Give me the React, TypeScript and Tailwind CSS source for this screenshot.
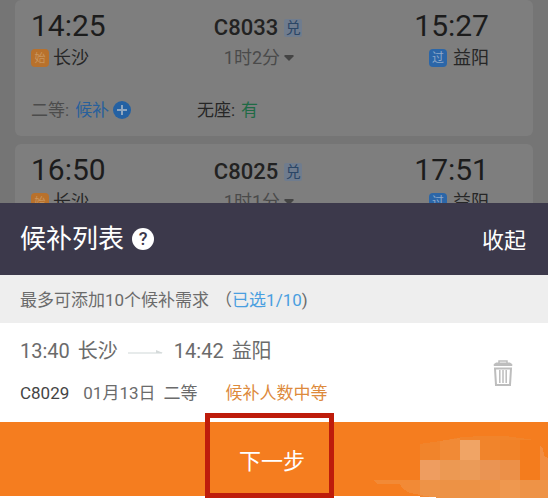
interface Train {
  depart: string;
  arrive: string;
  code: string;
  duration: string;
  seats?: { waitlist: string; standing: string };
}

const trains: Train[] = [
  {
    depart: "14:25",
    arrive: "15:27",
    code: "C8033",
    duration: "1时2分",
    seats: { waitlist: "候补", standing: "有" },
  },
  { depart: "16:50", arrive: "17:51", code: "C8025", duration: "1时1分" },
];

function TrainCard({ depart, arrive, code, duration, seats }: Train) {
  return (
    <article className="h-[136px] shrink-0 rounded-md bg-[#7e7e7e] px-4 pt-2">
      <div className="flex justify-between pr-7">
        <div>
          <div className="text-[30px] leading-9 text-[#1c1c1c]">{depart}</div>
          <div className="mt-0.5 flex items-center gap-1 text-[18px] leading-6 text-[#262626]">
            <span className="flex size-[18px] items-center justify-center rounded-sm bg-[#b8712c] text-[11px] leading-none text-[#c9965f]">
              始
            </span>
            长沙
          </div>
        </div>

        <div className="mr-1 pt-1">
          <div className="flex items-center gap-1.5 text-[22px] leading-8 font-medium text-[#222222]">
            {code}
            <span className="flex size-[18px] items-center justify-center rounded-xs bg-[#6f7c8e] text-[15px] leading-none font-normal text-[#2b4666]">
              兑
            </span>
          </div>
          <div className="flex items-center gap-1 pt-0.5 pl-2.5 text-[18px] leading-6 text-[#4a4a4a]">
            {duration}
            <svg className="h-[6px] w-[10px]" viewBox="0 0 10 6" fill="#444444">
              <path d="M1 0h8l1 1-5 5-5-5z" />
            </svg>
          </div>
        </div>

        <div className="flex flex-col items-end">
          <div className="text-[30px] leading-9 text-[#1c1c1c]">{arrive}</div>
          <div className="mt-0.5 flex items-center gap-1.5 text-[18px] leading-6 text-[#262626]">
            <span className="flex size-[18px] items-center justify-center rounded-sm bg-[#2b66a8] text-[12px] leading-none text-[#8fa9c8]">
              过
            </span>
            益阳
          </div>
        </div>
      </div>

      {seats && (
        <div className="mt-6 flex text-[17px] leading-8">
          <div className="flex w-1/3 items-center gap-1.5">
            <span className="text-[#4c4c4c]">二等:</span>
            <a href="#waitlist" className="flex items-center gap-1 text-[#28609c]">
              {seats.waitlist}
              <svg className="size-[18px]" viewBox="0 0 18 18">
                <circle cx="9" cy="9" r="9" fill="#2461a3" />
                <path d="M9 4v10M4 9h10" stroke="#8fa6bf" strokeWidth="2" />
              </svg>
            </a>
          </div>
          <div className="flex gap-1.5 pl-1">
            <span className="text-[#262626]">无座:</span>
            <span className="text-[#1f6a45]">{seats.standing}</span>
          </div>
        </div>
      )}
    </article>
  );
}

function TrashIcon() {
  return (
    <svg className="h-7 w-5" viewBox="0 0 20 28" fill="none" stroke="#bdbdbd">
      <path d="M6 4V2h8v2" strokeWidth="1.500" />
      <path d="M1 6.500V5.500L3 4h14l2 1.500v1z" fill="#bdbdbd" strokeWidth="1" />
      <path d="M2 9.500h16L17 26H3z" strokeWidth="2" />
      <path d="M6.800 11v13M10 11v13M13.200 11v13" strokeWidth="1.500" />
    </svg>
  );
}

function Mosaic() {
  return (
    <svg
      className="pointer-events-none absolute right-0 bottom-0 h-[62px] w-[175px]"
      viewBox="0 0 175 62"
      shapeRendering="crispEdges"
    >
      <path d="M0 44h47v17H59L47 59 37 57 30 53 27 48H5z" fill="#f28a36" />
      <path d="M47 8 67 5 87 1.500 107 0h25l15 2 14 2v20H47z" fill="#f1842b" />
      <path d="M67 5 87 2v22H67z" fill="#f18a36" />
      <path d="M87 4h20v20H87z" fill="#f0a465" />
      <path d="M127 4h20v20h-20z" fill="#f18228" />
      <path d="M47 24h20v20H47z" fill="#ee9d60" />
      <path d="M67 24h20v20H67z" fill="#ec9953" />
      <path d="M87 24h20v20H87z" fill="#eb9b58" />
      <path d="M107 24h20v20h-20z" fill="#ea9453" />
      <path d="M127 24h20v20h-20z" fill="#ec9048" />
      <path d="M147 4h20v40h-20z" fill="#f47c1d" />
      <path d="M167 10l3 2 1 8 4 2v22h-8z" fill="#f18d42" />
      <path d="M47 44h128v18H67l-8-1-12-2z" fill="#ee9347" />
      <path d="M67 44h40v18H67z" fill="#ed9245" />
      <path d="M127 44h20v18h-20z" fill="#ef984f" />
    </svg>
  );
}

export default function App() {
  return (
    <div className="flex h-screen flex-col overflow-hidden bg-[#757575] font-[Roboto,'Noto_Sans_CJK_SC',sans-serif]">
      <main className="flex min-h-0 flex-1 flex-col gap-2 overflow-hidden px-[15px]">
        {trains.map((train) => (
          <TrainCard key={train.code} {...train} />
        ))}
      </main>

      <section className="shrink-0 bg-white">
        <header className="flex h-[72px] items-center justify-between bg-[#3c394b] pr-[22px] pl-5 text-white">
          <div className="flex items-center gap-2">
            <h1 className="text-[26px] leading-9">候补列表</h1>
            <button
              aria-label="帮助"
              className="flex size-[22px] items-center justify-center rounded-full bg-white text-[18px] leading-none font-medium text-[#3c394b]"
            >
              ?
            </button>
          </div>
          <button className="pt-1 text-[22px] leading-8">收起</button>
        </header>

        <p className="flex h-12 items-center gap-1.5 bg-[#eeeeee] px-5 pt-0.5 text-[17px] leading-6 text-[#6b6b6b]">
          <span>最多可添加10个候补需求</span>
          <span>
            （<span className="text-[#4a9fe0]">已选1/10</span>)
          </span>
        </p>

        <div className="flex h-[99px] items-center justify-between pr-[35px] pl-5">
          <div className="flex flex-col gap-4 pb-1">
            <div className="flex items-center gap-2 text-[20px] leading-7 text-[#6b6b6b]">
              <span>13:40</span>
              <span>长沙</span>
              <svg className="mx-0.5 h-2 w-9" viewBox="0 0 36 8">
                <path d="M0 6h34" stroke="#dfe4e4" strokeWidth="1.500" />
                <path d="M28 3l7 3h-7z" fill="#d5dada" />
              </svg>
              <span>14:42</span>
              <span>益阳</span>
            </div>
            <div className="flex items-center text-[17px] leading-6 text-[#6b6b6b]">
              <span className="text-[#444444]">C8029</span>
              <span className="ml-3.5">01月13日</span>
              <span className="ml-2">二等</span>
              <span className="ml-7 text-[#dd8a3c]">候补人数中等</span>
            </div>
          </div>
          <button aria-label="删除">
            <TrashIcon />
          </button>
        </div>

        <footer className="relative pb-0.5">
          <button className="flex h-[74px] w-full items-center justify-center bg-[#f57d1f] pt-1.5 pr-1 text-[22px] leading-8 text-white">
            下一步
          </button>
          <div className="pointer-events-none absolute -top-[9px] bottom-0 left-1/2 w-[129px] -translate-x-[69px] border-[5px] border-[#be1c0b]" />
          <Mosaic />
        </footer>
      </section>
    </div>
  );
}
